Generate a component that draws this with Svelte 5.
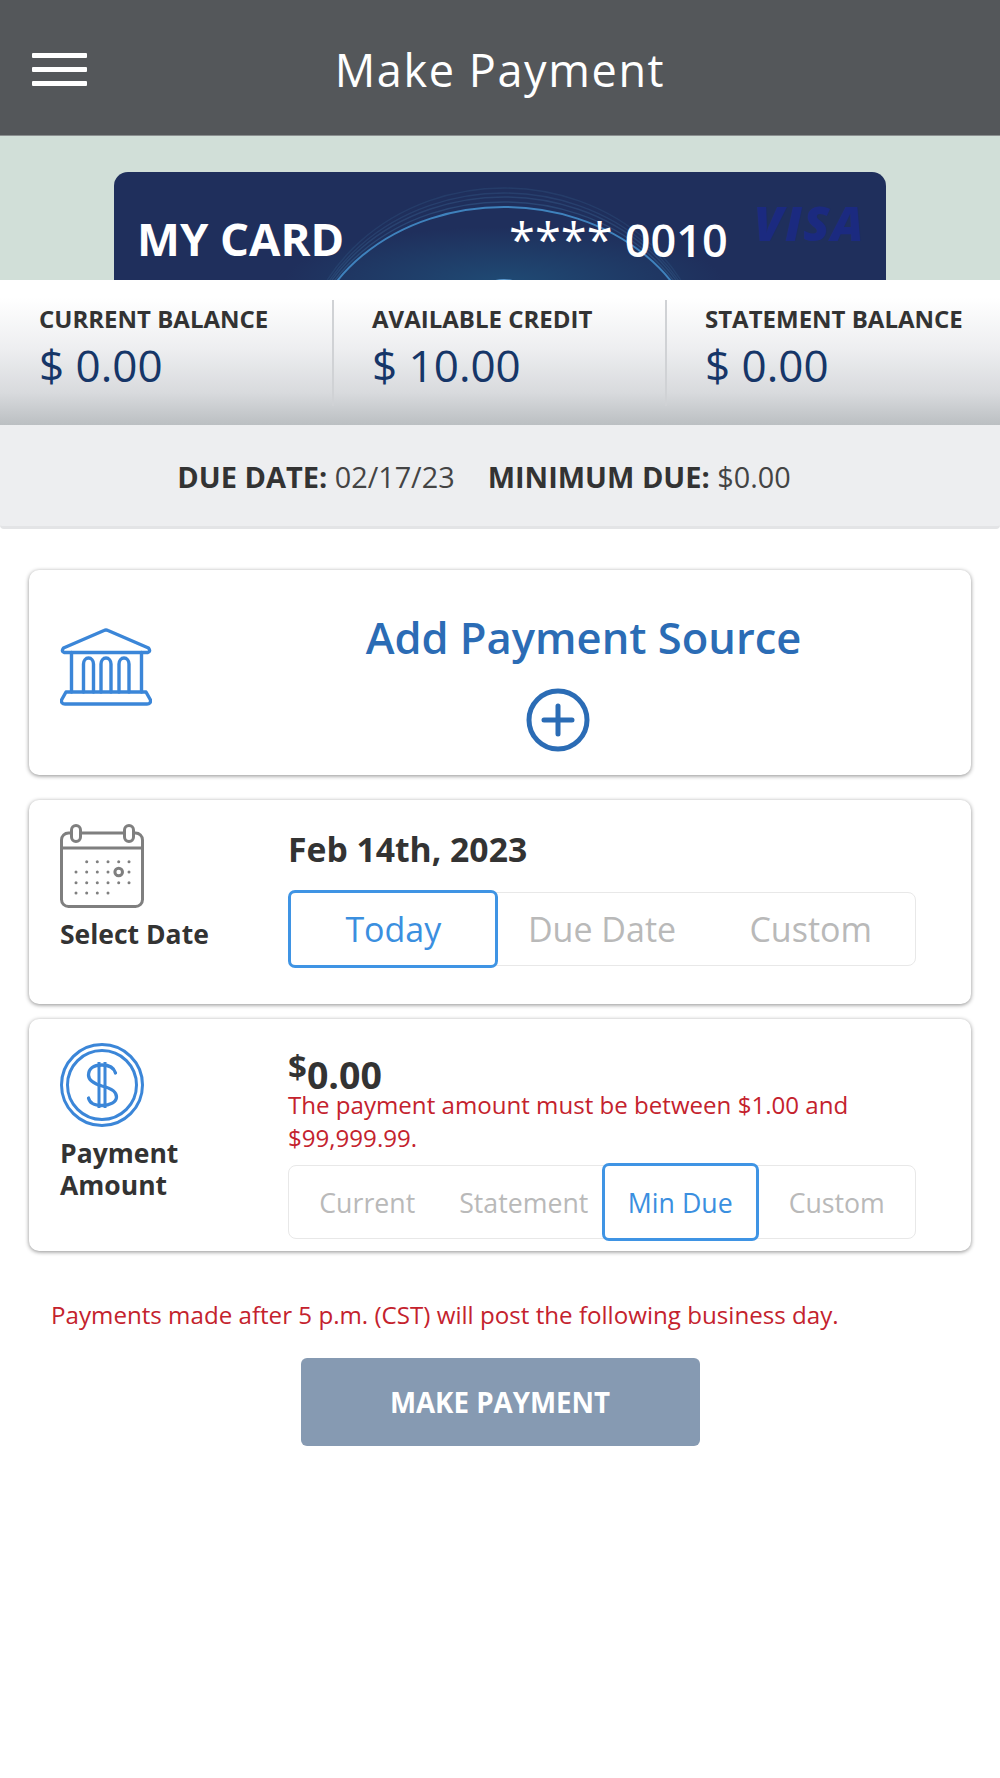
<script>
    const stats = [
        { label: "CURRENT BALANCE", value: "$ 0.00" },
        { label: "AVAILABLE CREDIT", value: "$ 10.00" },
        { label: "STATEMENT BALANCE", value: "$ 0.00" }
    ];
    const dateOptions = ["Today", "Due Date", "Custom"];
    const amountOptions = ["Current", "Statement", "Min Due", "Custom"];
    const calendarRows = [
        { y: 37.7, xs: [26.7, 37.3, 48, 58.7, 69] },
        { y: 48, xs: [16, 26.7, 37.3, 48, 69] },
        { y: 58.7, xs: [16, 26.7, 37.3, 48, 58.7, 69] },
        { y: 69, xs: [16, 26.7, 37.3, 48] }
    ];
    const rings = [
        { ry: 184, rx: 204, o: 0.22 },
        { ry: 179, rx: 203, o: 0.28 },
        { ry: 175, rx: 202, o: 0.32 },
        { ry: 170, rx: 201, o: 0.38 }
    ];

    let selectedDate = $state("Today");
    let selectedAmount = $state("Min Due");
</script>

<div class="page">
    <header class="topbar">
        <button class="menu" aria-label="Menu">
            <span></span>
            <span></span>
            <span></span>
        </button>
        <h1>Make Payment</h1>
    </header>

    <div class="banner">
        <div class="credit-card">
            <svg class="rings" viewBox="0 0 772 110" aria-hidden="true">
                <defs>
                    <radialGradient id="glow" cx="50%" cy="100%" r="50%">
                        <stop offset="0" stop-color="#1f4a74" />
                        <stop offset="1" stop-color="#1f4a74" stop-opacity="0" />
                    </radialGradient>
                </defs>
                <rect x="170" y="0" width="440" height="110" fill="url(#glow)" />
                <g fill="none">
                    {#each rings as ring}
                        <ellipse cx="390" cy="200" rx={ring.rx} ry={ring.ry} stroke="#3d6c9c" stroke-opacity={ring.o} stroke-width="1.4" />
                    {/each}
                    <ellipse cx="390" cy="200" rx="200" ry="165" stroke="#3f82bd" stroke-width="2" />
                </g>
                <ellipse cx="390" cy="110" rx="12" ry="3" fill="#5d9bd0" />
            </svg>
            <span class="card-name">MY CARD</span>
            <span class="card-number">**** <b>0010</b></span>
            <span class="card-brand">VISA</span>
        </div>
    </div>

    <section class="stats">
        {#each stats as stat}
            <div class="stat">
                <div class="stat-label">{stat.label}</div>
                <div class="stat-value">{stat.value}</div>
            </div>
        {/each}
    </section>

    <section class="due">
        <span><b>DUE DATE:</b> 02/17/23</span>
        <span><b>MINIMUM DUE:</b> $0.00</span>
    </section>

    <main class="content">
        <div class="panel source">
            <svg class="bank" viewBox="0 0 92 78" fill="none" stroke="#3b86d8" stroke-width="3.4" stroke-linejoin="round" stroke-linecap="round" aria-hidden="true">
                <path d="M44 2.5 Q46 1.5 48 2.5 L88.5 20 Q91 23.5 88 24.5 H4 Q1 23.5 3.5 20 Z" />
                <path d="M11.5 24.5 V64 M81.5 24.5 V64" />
                <path d="M23.5 64 V36 A5 6 0 0 1 33.5 36 V64" />
                <path d="M41 64 V36 A5 6 0 0 1 51 36 V64" />
                <path d="M59 64 V36 A5 6 0 0 1 69 36 V64" />
                <path d="M6 64 H86 L90.5 72 Q91 76 87 76 H5 Q1 76 1.5 72 Z" />
            </svg>
            <div class="source-body">
                <div class="source-title">Add Payment Source</div>
                <svg class="plus" viewBox="0 0 64 64" fill="none" stroke="#2b6cb5" stroke-width="5" aria-hidden="true">
                    <circle cx="32" cy="32" r="29" />
                    <path d="M32 18 V46 M18 32 H46" stroke-linecap="round" />
                </svg>
            </div>
        </div>

        <div class="panel row date-panel">
            <div class="side">
                <svg class="side-icon" viewBox="0 0 84 84" fill="none" stroke="#7f7f7f" stroke-width="3" aria-hidden="true">
                    <rect x="1.5" y="9" width="81" height="73.5" rx="7" />
                    <path d="M1.5 24 H82.5" />
                    <rect x="11.5" y="1.5" width="9" height="16" rx="4.5" fill="#fff" />
                    <rect x="64.5" y="1.5" width="9" height="16" rx="4.5" fill="#fff" />
                    <g fill="#7f7f7f" stroke="none">
                        {#each calendarRows as row}
                            {#each row.xs as x}
                                <circle cx={x} cy={row.y} r="1.5" />
                            {/each}
                        {/each}
                    </g>
                    <circle cx="58.7" cy="48" r="3.8" />
                </svg>
                <div class="side-label">Select Date</div>
            </div>
            <div class="main">
                <div class="big-value">Feb 14th, 2023</div>
                <div class="segments large">
                    {#each dateOptions as option}
                        <button class:active={selectedDate === option} onclick={() => (selectedDate = option)}>{option}</button>
                    {/each}
                </div>
            </div>
        </div>

        <div class="panel row amount-panel">
            <div class="side">
                <svg class="side-icon" viewBox="0 0 84 84" fill="none" stroke="#3b86d8" stroke-width="3" aria-hidden="true">
                    <circle cx="42" cy="42" r="40.5" />
                    <circle cx="42" cy="42" r="34.5" />
                    <path d="M55.500 30 C54 25 49 22 42 22 C33 22 28.500 26 28.500 32 C28.500 38 35 41 42 43 C50 45 56.500 48 56.500 54 C56.500 59 50 62.500 42 62.500 C35 62.500 29.500 60 28.500 55" stroke-linecap="round" stroke-width="3.300" />
                    <path d="M39 19 V65 M45 19 V65" />
                </svg>
                <div class="side-label">Payment<br />Amount</div>
            </div>
            <div class="main">
                <div class="big-value amount"><sup>$</sup>0.00</div>
                <div class="error">The payment amount must be between $1.00 and $99,999.99.</div>
                <div class="segments small">
                    {#each amountOptions as option}
                        <button class:active={selectedAmount === option} onclick={() => (selectedAmount = option)}>{option}</button>
                    {/each}
                </div>
            </div>
        </div>

        <p class="notice">Payments made after 5 p.m. (CST) will post the following business day.</p>

        <button class="submit">MAKE PAYMENT</button>
    </main>
</div>

<style>
    :global(body) {
        background: #fff;
    }

    .page {
        width: 1000px;
        font-family: "Open Sans", "Liberation Sans", sans-serif;
        color: #333;
    }

    button {
        font-family: inherit;
        background: none;
        border: 0;
        padding: 0;
    }

    .topbar {
        height: 135px;
        background: #54575a;
        border-bottom: 1px solid #8b8f90;
        position: relative;
        display: flex;
        align-items: center;
        justify-content: center;
    }

    .topbar h1 {
        margin: 0 0 -3px;
        font-size: 45px;
        font-weight: 400;
        letter-spacing: 1.6px;
        color: #fff;
    }

    .menu {
        position: absolute;
        left: 32px;
        top: 53px;
        width: 55px;
        height: 33px;
        display: flex;
        flex-direction: column;
        justify-content: space-between;
    }

    .menu span {
        display: block;
        height: 5px;
        background: #fff;
        border-radius: 1px;
    }

    .banner {
        height: 144px;
        box-sizing: border-box;
        padding: 36px 114px 0;
        background: #d1dfd8;
        overflow: hidden;
    }

    .credit-card {
        position: relative;
        height: 150px;
        background: #1f2f5c;
        border-radius: 14px 14px 0 0;
        overflow: hidden;
    }

    .rings {
        position: absolute;
        left: 0;
        top: 0;
        width: 772px;
        height: 110px;
    }

    .card-name,
    .card-number,
    .card-brand {
        position: absolute;
        line-height: 1;
        white-space: nowrap;
    }

    .card-name {
        left: 23px;
        top: 44px;
        font-size: 45.500px;
        font-weight: 700;
        color: #fff;
    }

    .card-number {
        left: 395px;
        top: 44px;
        font-size: 47px;
        font-weight: 400;
        color: #fff;
    }

    .card-number b {
        font-size: 45px;
        font-weight: 600;
    }

    .card-brand {
        left: 640px;
        top: 27px;
        font-size: 48px;
        font-weight: 800;
        font-style: italic;
        letter-spacing: 1.5px;
        color: #1b2a80;
    }

    .stats {
        height: 145px;
        display: flex;
        background: linear-gradient(#fff 12%, #edeef0 48%, #d8dadd 78%, #bbbfc2);
    }

    .stat {
        flex: none;
        width: 333px;
        margin-top: 20px;
        height: 106px;
        box-sizing: border-box;
        padding: 3px 0 0 38px;
        border-left: 2px solid #d0d2d5;
    }

    .stat:first-child {
        width: 332px;
        padding-left: 39px;
        border-left: 0;
    }

    .stat-label {
        font-size: 24px;
        font-weight: 700;
        line-height: 32px;
        white-space: nowrap;
    }

    .stat-value {
        font-size: 44px;
        font-weight: 400;
        line-height: 60px;
        color: #163668;
    }

    .due {
        height: 104px;
        padding: 1px 32px 0 0;
        box-sizing: border-box;
        display: flex;
        align-items: center;
        justify-content: center;
        gap: 33px;
        background: #edeef0;
        border-bottom: 3px solid #e3e4e6;
        border-radius: 0 0 4px 4px;
        font-size: 28.800px;
        color: #444;
    }

    .due span {
        white-space: nowrap;
    }

    .due b {
        font-size: 29px;
        font-weight: 700;
        color: #333;
    }

    .content {
        padding: 41px 29px 0;
        display: flex;
        flex-direction: column;
    }

    .panel {
        background: #fff;
        border-radius: 10px;
        box-shadow: 0 1px 4px rgba(0, 0, 0, 0.45);
    }

    .source {
        height: 205px;
        display: flex;
        padding-left: 31px;
        box-sizing: border-box;
    }

    .bank {
        width: 92px;
        height: 78px;
        margin-top: 58px;
    }

    .source-body {
        flex: 1;
        display: flex;
        flex-direction: column;
        align-items: center;
        padding-top: 38px;
    }

    .source-title {
        font-size: 43.500px;
        font-weight: 600;
        line-height: 60px;
        color: #2b6cb5;
        margin-left: 44px;
    }

    .plus {
        width: 64px;
        height: 64px;
        margin: 20px 0 0 -8px;
    }

    .row {
        display: flex;
        box-sizing: border-box;
        padding: 24px 55px 0 31px;
    }

    .date-panel {
        margin-top: 25px;
        height: 204px;
    }

    .amount-panel {
        margin-top: 15px;
        height: 232px;
    }

    .side {
        width: 228px;
        flex: none;
    }

    .side-icon {
        width: 84px;
        height: 84px;
        display: block;
    }

    .side-label {
        font-size: 26.500px;
        font-weight: 700;
        line-height: 31.500px;
        margin-top: 11px;
    }

    .main {
        flex: 1;
        min-width: 0;
    }

    .big-value {
        font-size: 33.700px;
        font-weight: 700;
        line-height: 46px;
        margin: 2px 0 20px;
    }

    .big-value.amount {
        font-size: 37.500px;
        line-height: 27px;
        margin: 18px 0 0;
    }

    .big-value sup {
        font-size: 33px;
        line-height: 0;
        vertical-align: 10px;
    }

    .error {
        font-size: 24.100px;
        line-height: 33px;
        color: #c4222d;
    }

    .segments {
        display: flex;
        border: 1px solid #e8e8e8;
        border-radius: 8px;
    }

    .segments button {
        flex: 1;
        color: #b9b9b9;
        position: relative;
    }

    .segments button.active {
        color: #3b8fdf;
    }

    .segments button.active::after {
        content: "";
        position: absolute;
        inset: -3px 0;
        border: 3px solid #3f94e4;
        border-radius: 7px;
    }

    .segments button.active:first-child::after {
        left: -1px;
    }

    .segments.large {
        height: 72px;
        margin-top: 0;
    }

    .segments.large button {
        font-size: 34px;
    }

    .segments.small {
        height: 72px;
        margin-top: 11px;
    }

    .segments.small button {
        font-size: 26.700px;
    }

    .notice {
        margin: 47px 0 0 22px;
        font-size: 24.150px;
        line-height: 34px;
        color: #c4222d;
    }

    .submit {
        align-self: center;
        margin-top: 26px;
        width: 399px;
        height: 88px;
        border-radius: 6px;
        background: #869ab2;
        color: #fff;
        font-size: 27.700px;
        font-weight: 700;
    }
</style>
